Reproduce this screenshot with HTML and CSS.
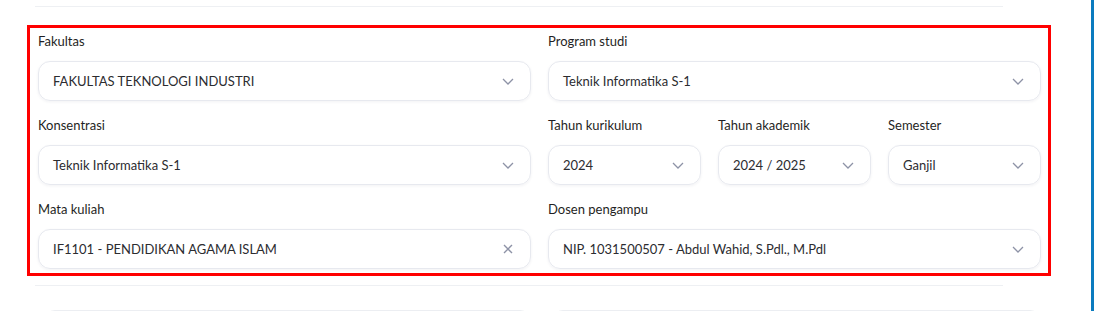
FILE: index.html
```html
<!DOCTYPE html>
<html lang="id">
<head>
  <meta charset="UTF-8" />
  <meta name="viewport" content="width=device-width, initial-scale=1.0"/>
  <title>Filter Mata Kuliah</title>
  <link rel="stylesheet" href="styles.css">
</head>
<body>
<div class="screen">
  <main class="content">
    <div class="divider top"></div>

    <form class="filter">
      <div class="field">
        <label>Fakultas</label>
        <div class="select">
          <span>FAKULTAS TEKNOLOGI INDUSTRI</span>
          <svg class="chev" viewBox="0 0 12 7"><path d="M1 1l5 5 5-5"/></svg>
        </div>
      </div>
      <div class="field">
        <label>Program studi</label>
        <div class="select">
          <span>Teknik Informatika S-1</span>
          <svg class="chev" viewBox="0 0 12 7"><path d="M1 1l5 5 5-5"/></svg>
        </div>
      </div>

      <div class="field">
        <label>Konsentrasi</label>
        <div class="select">
          <span>Teknik Informatika S-1</span>
          <svg class="chev" viewBox="0 0 12 7"><path d="M1 1l5 5 5-5"/></svg>
        </div>
      </div>
      <div class="split">
        <div class="field">
          <label>Tahun kurikulum</label>
          <div class="select">
            <span>2024</span>
            <svg class="chev" viewBox="0 0 12 7"><path d="M1 1l5 5 5-5"/></svg>
          </div>
        </div>
        <div class="field">
          <label>Tahun akademik</label>
          <div class="select">
            <span>2024 / 2025</span>
            <svg class="chev" viewBox="0 0 12 7"><path d="M1 1l5 5 5-5"/></svg>
          </div>
        </div>
        <div class="field">
          <label>Semester</label>
          <div class="select">
            <span>Ganjil</span>
            <svg class="chev" viewBox="0 0 12 7"><path d="M1 1l5 5 5-5"/></svg>
          </div>
        </div>
      </div>

      <div class="field">
        <label>Mata kuliah</label>
        <div class="select">
          <span>IF1101 - PENDIDIKAN AGAMA ISLAM</span>
          <svg class="clear" viewBox="0 0 10 10"><path d="M1 1l8 8M9 1l-8 8"/></svg>
        </div>
      </div>
      <div class="field">
        <label>Dosen pengampu</label>
        <div class="select">
          <span>NIP. 1031500507 - Abdul Wahid, S.Pdl., M.Pdl</span>
          <svg class="chev" viewBox="0 0 12 7"><path d="M1 1l5 5 5-5"/></svg>
        </div>
      </div>
    </form>

    <div class="divider bottom"></div>

    <div class="next">
      <div class="ghost left"></div>
      <div class="ghost right"></div>
    </div>
  </main>
  <div class="edge"></div>
</div>
</body>
</html>
```

FILE: styles.css
```css
* { margin: 0; padding: 0; box-sizing: border-box; }
body {
  font-family: 'Lato', 'Noto Sans', sans-serif;
  background: white;
  color: #222;
}
.screen {
  display: flex;
  height: 311px;
  overflow: hidden;
}
.content {
  flex: 1;
}
.edge {
  width: 3px;
  background: #0a7bbf;
}
.divider {
  height: 1px;
  background: #eef0f3;
  margin-left: 35px;
  width: 968px;
}
.divider.top {
  margin-top: 6px;
}
.filter {
  margin: 18px 0 0 27px;
  width: 1024px;
  border: 3px solid #ff0000;
  padding: 5px 7px 4px 8px;
  display: grid;
  grid-template-columns: 1fr 1fr;
  column-gap: 17px;
  row-gap: 16px;
}
.split {
  display: grid;
  grid-template-columns: 1fr 1fr 1fr;
  column-gap: 17px;
}
.field label {
  display: block;
  font-size: 13px;
  line-height: 16px;
  color: #1f1f24;
  margin-bottom: 12px;
}
.select {
  height: 40px;
  border: 1px solid #e7e9ef;
  border-radius: 12px;
  box-shadow: 0 1px 3px rgba(30,40,70,0.06);
  display: flex;
  align-items: center;
  justify-content: space-between;
  padding: 0 16px 0 14px;
  font-size: 13px;
  color: #2c2c30;
}
.chev {
  width: 12px;
  height: 7px;
  fill: none;
  stroke: #8d92a6;
  stroke-width: 1.3;
}
.clear {
  width: 10px;
  height: 10px;
  margin-right: 1px;
  fill: none;
  stroke: #8d92a6;
  stroke-width: 1.4;
}
.divider.bottom {
  margin-top: 9px;
}
.next {
  display: flex;
  margin-top: 24px;
  padding-left: 45px;
  gap: 23px;
}
.ghost {
  height: 20px;
  border: 1px solid #eceef2;
  border-radius: 10px;
}
.ghost.left { width: 485px; }
.ghost.right { width: 487px; }
```
